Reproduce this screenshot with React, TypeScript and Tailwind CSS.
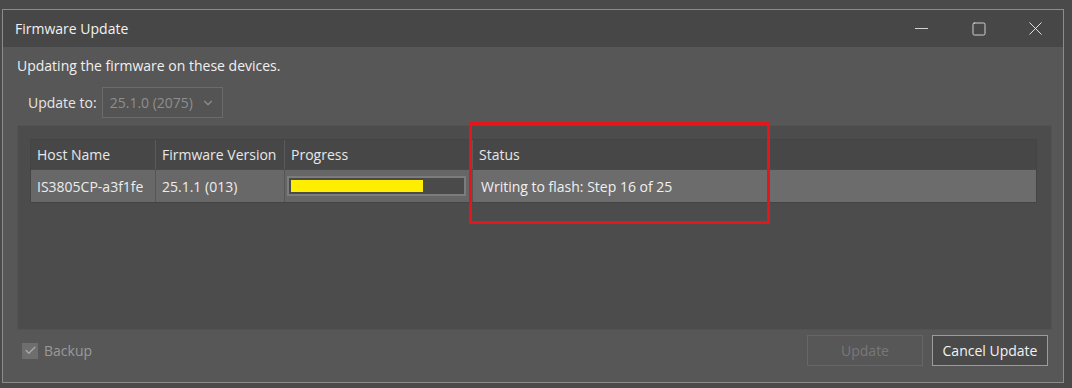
import { Check, ChevronDown, Minus, Square, X } from 'lucide-react';

const font = { fontFamily: '"Segoe UI", "Open Sans", "Noto Sans", sans-serif' };

const columns = [
  { label: 'Host Name', width: 'w-[125px]' },
  { label: 'Firmware Version', width: 'w-[129px]' },
  { label: 'Progress', width: 'w-[188px]' },
  { label: 'Status', width: 'flex-1' },
];

export default function App() {
  const progress = 77;

  return (
    <div className="w-[1072px] h-[388px] bg-[#4a4a4a] pt-[9px] pl-[2px] overflow-hidden" style={font}>
      {/* Dialog window */}
      <div className="relative w-[1062px] h-[374px] border border-[#8c8c8c] bg-[#575757] flex flex-col">
        {/* Title bar */}
        <div className="h-[37px] bg-[#474747] flex items-center justify-between pl-[12px] shrink-0">
          <span className="text-[14px] text-[#f2f2f2]">Firmware Update</span>
          <div className="flex items-center h-full">
            <div className="w-[57px] flex justify-center text-[#e6e6e6]">
              <Minus size={21} strokeWidth={1} />
            </div>
            <div className="w-[57px] flex justify-center text-[#e6e6e6]">
              <Square size={16} strokeWidth={1.3} />
            </div>
            <div className="w-[56px] flex justify-center text-[#e6e6e6]">
              <X size={23} strokeWidth={1} />
            </div>
          </div>
        </div>

        {/* Body */}
        <div className="flex-1 flex flex-col pl-[14px] pr-[11px]">
          <p className="mt-[9px] text-[14px] text-[#f0f0f0] leading-[20px]">Updating the firmware on these devices.</p>

          <div className="mt-[11px] flex items-center pl-[11px]">
            <span className="text-[14px] text-[#e6e6e6]">Update to:</span>
            <div className="ml-[5px] w-[121px] h-[31px] border border-[#6b6b6b] bg-[#545454] flex items-center justify-between px-[7px]">
              <span className="text-[14px] text-[#8e8e8e]">25.1.0 (2075)</span>
              <ChevronDown size={14} className="text-[#8e8e8e]" />
            </div>
          </div>

          {/* Device panel */}
          <div className="mt-[7px] h-[205px] bg-[#4c4c4c] border border-[#535353] pt-[13px] pl-[12px] pr-[14px]">
            <div className="flex flex-col border border-[#444]">
              <div className="flex h-[29px] bg-[#474747]">
                {columns.map((c, i) => (
                  <div
                    key={c.label}
                    className={`${c.width} flex items-center px-[6px] text-[14px] text-[#e8e8e8] ${i < 3 ? 'border-r border-[#5a5a5a]' : ''}`}
                  >
                    {c.label}
                  </div>
                ))}
              </div>
              <div className="flex h-[33px] bg-[#6c6c6c] border-t border-[#4a4a4a]">
                <div className="w-[125px] flex items-center px-[6px] text-[14px] text-[#ececec] border-r border-[#555] bg-[#686868]">
                  IS3805CP-a3f1fe
                </div>
                <div className="w-[129px] flex items-center px-[6px] text-[14px] text-[#ececec] border-r border-[#555] bg-[#686868]">
                  25.1.1 (013)
                </div>
                <div className="w-[188px] flex items-center px-[2px] border-r border-[#555] bg-[#666]">
                  <div className="w-[179px] h-[20px] border-[2px] border-[#7c7c7c] bg-[#4a4a4a] p-[2px] flex">
                    <div className="h-full bg-[#ffee00]" style={{ width: `${progress}%` }} />
                  </div>
                </div>
                <div className="flex-1 flex items-center px-[8px] text-[14px] text-[#f0f0f0]">
                  Writing to flash: Step 16 of 25
                </div>
              </div>
            </div>
          </div>

          {/* Footer */}
          <div className="mt-[5px] flex items-center justify-between">
            <label className="flex items-center gap-[6px] pl-[5px]">
              <span className="w-[16px] h-[16px] bg-[#6e6e6e] flex items-center justify-center">
                <Check size={13} strokeWidth={2.5} className="text-[#a8a8a8]" />
              </span>
              <span className="text-[14px] text-[#9a9a9a]">Backup</span>
            </label>
            <div className="flex gap-[9px] mr-[4px]">
              <button className="w-[116px] h-[31px] border border-[#666] text-[14px] text-[#777]">Update</button>
              <button className="w-[116px] h-[31px] border border-[#9c9c9c] bg-[#4a4a4a] text-[14px] text-[#f2f2f2]">
                Cancel Update
              </button>
            </div>
          </div>
        </div>

        {/* Red highlight annotation */}
        <div className="absolute left-[466px] top-[112px] w-[301px] h-[102px] border-[3px] border-[#e3161b]" />
      </div>
    </div>
  );
}
